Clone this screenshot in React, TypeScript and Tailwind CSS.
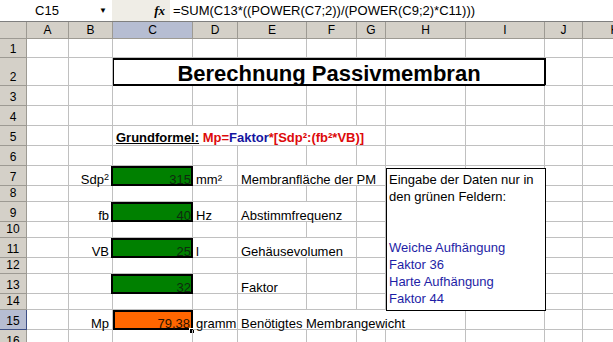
import React from "react";
import { twMerge } from "tailwind-merge";

// column widths of the sheet: row header, A .. K
const COLS =
  "grid grid-cols-[27px_42px_44px_80px_45px_69px_50px_29px_80px_79px_38px_64px]";

function Cell({
  className = "",
  children,
}: {
  className?: string;
  children?: React.ReactNode;
}) {
  return (
    <div
      className={twMerge(
        "relative flex items-end whitespace-nowrap border-r border-b border-[#c0c0c0] px-[3px] text-[13px] leading-[11px] text-black",
        className
      )}
    >
      {children}
    </div>
  );
}

const blank = (n: number, key: string) =>
  Array.from({ length: n }, (_, i) => <Cell key={key + i} />);

function RowHead({ n, active }: { n: number; active?: boolean }) {
  return (
    <div
      className={twMerge(
        "flex items-end justify-center border-r border-b border-[#9d9a93] bg-[#d4d0c8] pb-[1px] text-[12px] leading-[13px] text-black",
        active && "border-[#3d4f86] bg-[#b6bdd2]"
      )}
    >
      {n}
    </div>
  );
}

function Row({
  n,
  h,
  active,
  children,
}: {
  n: number;
  h: string;
  active?: boolean;
  children?: React.ReactNode;
}) {
  return (
    <div className={twMerge(COLS, h)}>
      <RowHead n={n} active={active} />
      {children}
    </div>
  );
}

// green input field
function Input({ value }: { value: string }) {
  return (
    <Cell className="-ml-[2px] justify-end border-2 border-black bg-[#008000] pr-0 leading-[9px] text-[#0f2a0f]">
      {value}
    </Cell>
  );
}

export default function App() {
  const letters = ["A", "B", "C", "D", "E", "F", "G", "H", "I", "J", "K"];

  return (
    <div className="relative h-[342px] w-[613px] overflow-hidden bg-white font-['Liberation_Sans',Arial,sans-serif]">
      {/* formula bar */}
      <div className="flex h-[22px] items-stretch border-b border-[#7f7f7f] bg-[#efede6]">
        <div className="flex w-[94px] items-center justify-center bg-white text-[13px]">
          C15
        </div>
        <div className="flex w-[18px] items-center justify-center bg-white text-[8px] text-black">
          ▼
        </div>
        <div className="flex w-[58px] items-center justify-end pr-[5px] font-['Liberation_Serif',serif] text-[13px] font-bold italic">
          fx
        </div>
        <div className="flex flex-1 items-center bg-white pl-[3px] text-[13px]">
          =SUM(C13*((POWER(C7;2))/(POWER(C9;2)*C11)))
        </div>
      </div>

      {/* column headers */}
      <div className={twMerge(COLS, "h-[17px]")}>
        <div className="border-r border-b border-[#9d9a93] bg-[#d4d0c8]" />
        {letters.map((l) => (
          <div
            key={l}
            className={twMerge(
              "flex items-center justify-center border-r border-b border-[#9d9a93] bg-[#d4d0c8] text-[12px] leading-[13px]",
              l === "C" && "bg-[#b6bdd2]"
            )}
          >
            {l}
          </div>
        ))}
      </div>

      <Row n={1} h="h-[19px]">{blank(11, "r1")}</Row>

      <Row n={2} h="h-[28px]">
        {blank(2, "r2a")}
        <div className="col-span-7 -mx-[1px] flex items-end justify-center border-2 border-black bg-white text-[22px] leading-[20px] font-bold">
          Berechnung Passivmembran
        </div>
        {blank(2, "r2b")}
      </Row>

      <Row n={3} h="h-[20px]">{blank(11, "r3")}</Row>
      <Row n={4} h="h-[20px]">{blank(11, "r4")}</Row>

      <Row n={5} h="h-[20px]">
        {blank(2, "r5a")}
        <Cell className="col-span-5 font-bold leading-[15px]">
          <span>
            <span className="underline">Grundformel:</span>{" "}
            <span className="text-[#dd0a0a]">Mp=</span>
            <span className="text-[#1414a0]">Faktor</span>
            <span className="text-[#dd0a0a]">*[Sdp²:(fb²*VB)]</span>
          </span>
        </Cell>
        {blank(4, "r5b")}
      </Row>

      <Row n={6} h="h-[20px]">{blank(11, "r6")}</Row>

      <Row n={7} h="h-[20px]">
        <Cell />
        <Cell className="justify-end">
          <span>
            Sdp<sup className="text-[9px]">2</sup>
          </span>
        </Cell>
        <Input value="315" />
        <Cell>mm²</Cell>
        <Cell className="col-span-3">Membranfläche der PM</Cell>
        {blank(4, "r7")}
      </Row>
      <Row n={8} h="h-[16px]">{blank(11, "r8")}</Row>

      <Row n={9} h="h-[20px]">
        <Cell />
        <Cell className="justify-end">fb</Cell>
        <Input value="40" />
        <Cell>Hz</Cell>
        <Cell className="col-span-2">Abstimmfrequenz</Cell>
        {blank(5, "r9")}
      </Row>
      <Row n={10} h="h-[16px]">{blank(11, "r10")}</Row>

      <Row n={11} h="h-[20px]">
        <Cell />
        <Cell className="justify-end">VB</Cell>
        <Input value="25" />
        <Cell>l</Cell>
        <Cell className="col-span-2">Gehäusevolumen</Cell>
        {blank(5, "r11")}
      </Row>
      <Row n={12} h="h-[16px]">{blank(11, "r12")}</Row>

      <Row n={13} h="h-[20px]">
        <Cell />
        <Cell />
        <Input value="32" />
        <Cell />
        <Cell>Faktor</Cell>
        {blank(6, "r13")}
      </Row>
      <Row n={14} h="h-[16px]">{blank(11, "r14")}</Row>

      <Row n={15} h="h-[20px]" active>
        <Cell />
        <Cell className="justify-end">Mp</Cell>
        <Cell className="justify-end border-2 border-black bg-[#ff6600] pr-[1px] leading-[9px] text-[#2a1200]">
          79,38
          <span className="absolute -right-[4px] -bottom-[6px] h-[6px] w-[6px] border border-white bg-black" />
        </Cell>
        <Cell>gramm</Cell>
        <Cell className="col-span-4">Benötigtes Membrangewicht</Cell>
        {blank(3, "r15")}
      </Row>
      <Row n={16} h="h-[20px]">{blank(11, "r16")}</Row>

      {/* floating text box */}
      <div className="absolute top-[168px] left-[386px] h-[143px] w-[160px] border border-black bg-white pt-[2px] pl-[2px] text-[13px] leading-[17px] text-black">
        <p>Eingabe der Daten nur in</p>
        <p>den grünen Feldern:</p>
        <p>&nbsp;</p>
        <p>&nbsp;</p>
        <div className="text-[#1e1ea6]">
          <p>Weiche Aufhängung</p>
          <p>Faktor 36</p>
          <p>Harte Aufhängung</p>
          <p>Faktor 44</p>
        </div>
      </div>
    </div>
  );
}
